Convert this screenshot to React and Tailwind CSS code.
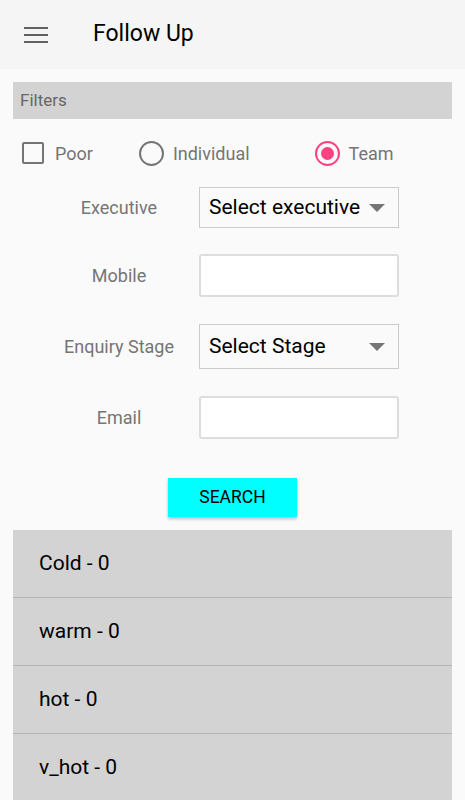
import { useState } from "react";

function Dropdown({ value, tall }) {
    return (
        <div className={`w-[200px] ${tall ? "h-[45px]" : "h-[41px]"} border border-[#cccccc] flex items-center justify-between pl-[9px] pr-[13px]`}>
            <span className="text-[21px] text-black">{value}</span>
            <span className="w-0 h-0 border-l-[8px] border-r-[8px] border-t-[8px] border-l-transparent border-r-transparent border-t-[#757575]" />
        </div>
    );
}

function TextBox() {
    return <div className="w-[200px] h-[43px] bg-white border-2 border-[#dddddd] rounded-[3px]" />;
}

function FieldRow({ label, children, className }) {
    return (
        <div className={`flex items-center ${className}`}>
            <div className="w-[160px] ml-[26px] text-center text-[18px] text-[#757575]">{label}</div>
            {children}
        </div>
    );
}

export default function App() {
    const [mode] = useState("team");
    const stages = ["Cold - 0", "warm - 0", "hot - 0", "v_hot - 0"];

    return (
        <div className="w-[465px] h-[800px] overflow-hidden bg-[#fafafa]" style={{ fontFamily: "Roboto, sans-serif" }}>
            {/* App bar */}
            <div className="h-[69px] bg-[#f5f5f5] flex items-center">
                <div className="ml-[24px] w-[24px] flex flex-col gap-[5px]">
                    <span className="block h-[2px] bg-[#616161]" />
                    <span className="block h-[2px] bg-[#616161]" />
                    <span className="block h-[2px] bg-[#616161]" />
                </div>
                <h1 className="ml-[45px] text-[23px] text-black">Follow Up</h1>
            </div>

            <div className="px-[13px] pt-[13px]">
                <div className="h-[37px] bg-[#d3d3d3] flex items-center px-[7px] text-[17px] text-[#666666]">Filters</div>

                {/* Type toggles */}
                <div className="flex items-center h-[46px] mt-[11px] text-[18px] text-[#757575]">
                    <div className="ml-[9px] w-[22px] h-[22px] border-2 border-[#757575] rounded-[2px]" />
                    <span className="ml-[11px]">Poor</span>
                    <div className="ml-[46px] w-[25px] h-[25px] rounded-full border-2 border-[#757575]" />
                    <span className="ml-[9px]">Individual</span>
                    <div className="ml-[65px] w-[25px] h-[25px] rounded-full border-2 border-[#ff4081] flex items-center justify-center">
                        {mode === "team" && <span className="w-[13px] h-[13px] rounded-full bg-[#ff4081]" />}
                    </div>
                    <span className="ml-[9px]">Team</span>
                </div>

                <FieldRow label="Executive" className="mt-[11px]">
                    <Dropdown value="Select executive" />
                </FieldRow>
                <FieldRow label="Mobile" className="mt-[26px]">
                    <TextBox />
                </FieldRow>
                <FieldRow label="Enquiry Stage" className="mt-[27px]">
                    <Dropdown value="Select Stage" tall />
                </FieldRow>
                <FieldRow label="Email" className="mt-[27px]">
                    <TextBox />
                </FieldRow>

                <div className="flex justify-center mt-[39px]">
                    <button className="w-[129px] h-[39px] bg-[#00ffff] text-[17.5px] text-black uppercase shadow-[0_2px_3px_rgba(0,0,0,0.25)]">
                        Search
                    </button>
                </div>

                {/* Stage counts */}
                <div className="mt-[13px] bg-[#d3d3d3]">
                    {stages.map((s, i) => (
                        <div
                            key={s}
                            className={`h-[68px] flex items-center pl-[26px] text-[21px] text-black ${i < stages.length - 1 ? "border-b border-[#b4b4b4]" : ""}`}
                        >
                            {s}
                        </div>
                    ))}
                </div>
            </div>
        </div>
    );
}
